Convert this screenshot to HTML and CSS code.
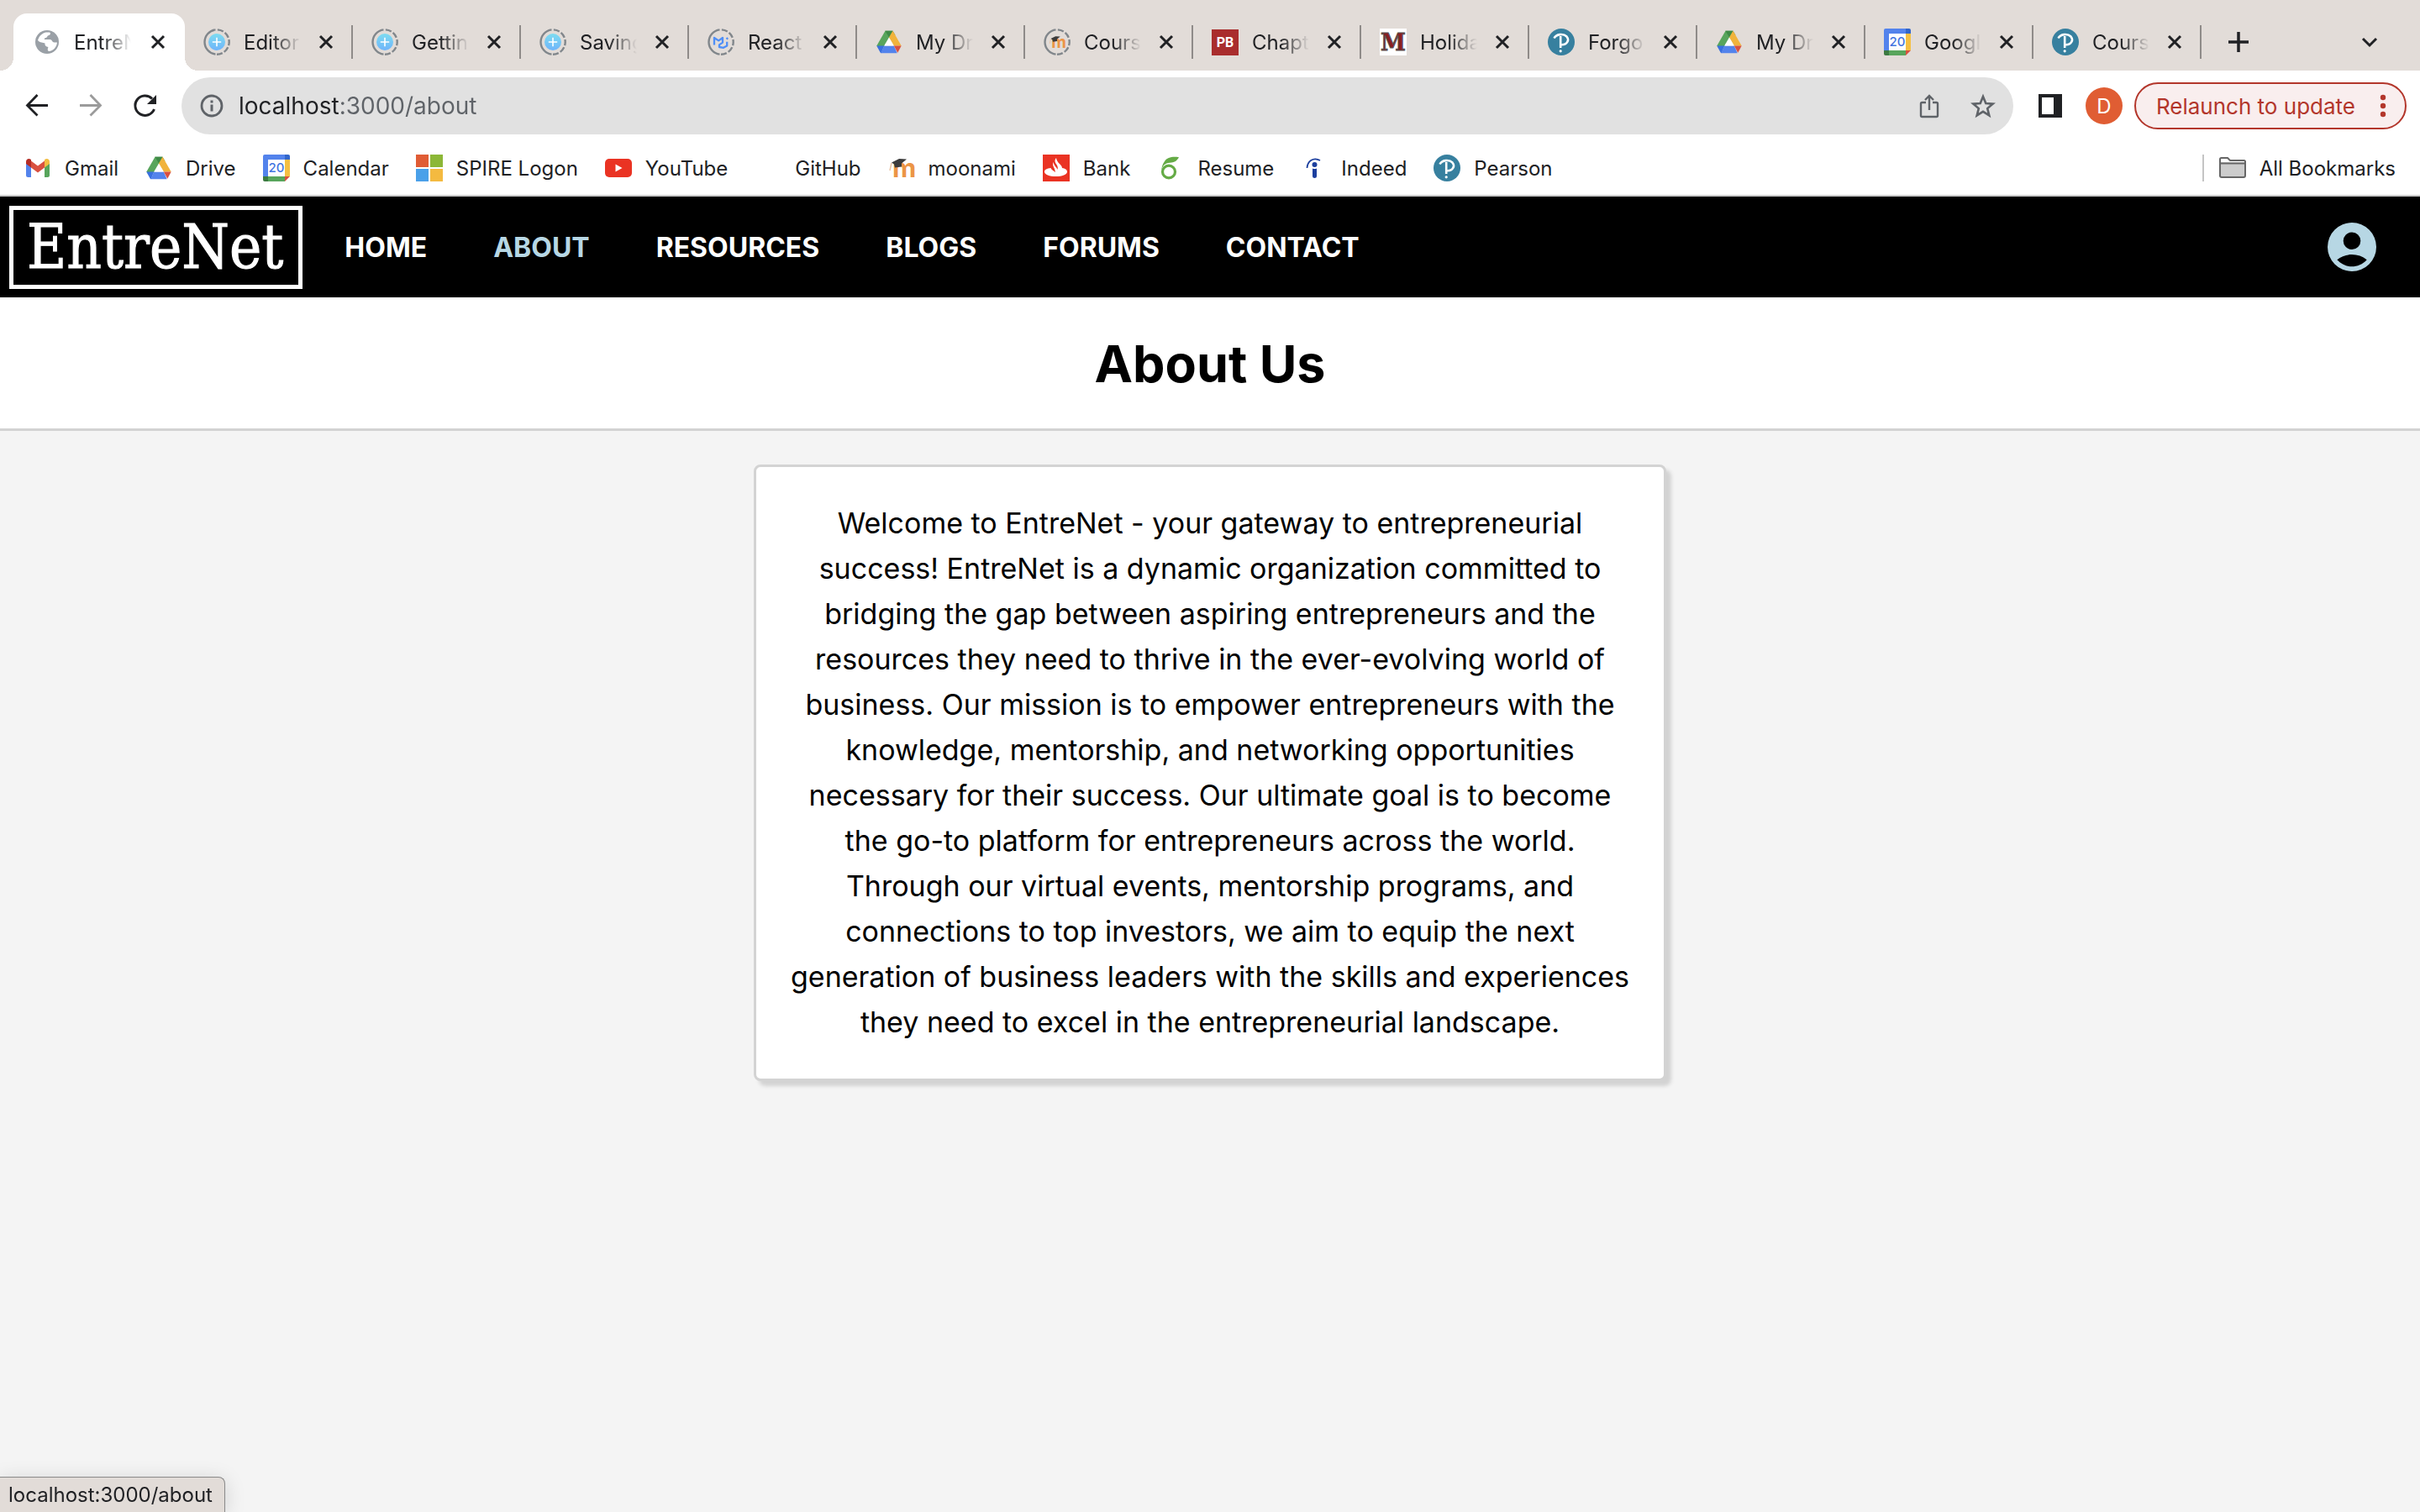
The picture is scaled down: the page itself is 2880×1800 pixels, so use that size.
FILE: index.html
```html
<!DOCTYPE html>
<html lang="en">
<head>
<meta charset="utf-8">
<title>EntreNet</title>
<link rel="stylesheet" href="styles.css">
</head>
<body>

<svg class="sprite" aria-hidden="true">
  <defs>
    <linearGradient id="sky" x1="0" y1="0" x2="0" y2="1">
      <stop offset="0" stop-color="#7ddcf0"/><stop offset="1" stop-color="#6fb4fa"/>
    </linearGradient>
    <symbol id="ring" viewBox="0 0 32 32">
      <g fill="none" stroke="#80868b" stroke-width="2.4">
        <path d="M14.5 1.4A14.7 14.7 0 0 0 14.5 30.6"/>
        <path d="M16 1.3A14.7 14.7 0 0 1 16 30.7" stroke-dasharray="7.2 2.3" stroke-dashoffset="-0.9"/>
      </g>
    </symbol>
    <symbol id="plusdoc" viewBox="0 0 32 32">
      <use href="#ring"/>
      <circle cx="16" cy="16" r="10" fill="url(#sky)"/>
      <path d="M16 10.8v10.4M10.8 16h10.4" stroke="#fff" stroke-width="1.6"/>
    </symbol>
    <symbol id="mui" viewBox="0 0 32 32">
      <use href="#ring"/>
      <path d="M8 19.5V11l5.2 3.4L18 11v5.6l-4 2.8v2.6l5 .8 4.2-2.4v-4.6M22.5 12.5l1.8-1.4" fill="none" stroke="#4f8ff7" stroke-width="2.3" stroke-linejoin="round"/>
    </symbol>
    <symbol id="moodle" viewBox="0 0 32 32">
      <text x="5" y="27" font-family="Inter, sans-serif" font-size="31" font-weight="700" fill="#ec9546">m</text>
      <path d="M4 9.5L13 5l9 .5-6 5v4l-8 1-1-4z" fill="#3c3c3c"/>
      <path d="M4 10l-2 9" stroke="#e9c3a4" stroke-width="1.5"/>
    </symbol>
    <symbol id="drive" viewBox="0 0 32 32">
      <path d="M11.5 2.8h9l3 5.2-7.5 3z" fill="#3f8a46"/>
      <path d="M11.5 2.8L1.3 20.5 6 27l14.5-21z" fill="#58a55c"/>
      <path d="M11.5 2.8h9L16 10.5z" fill="#3f8a46"/>
      <path d="M20.5 2.8h-.1L16 10.5l5.8 10h8.9z" fill="#f1b33c"/>
      <path d="M10.2 20.5H1.3L5.6 28.5q.4.7 1.2.7z" fill="#3970e0"/>
      <path d="M6.4 29.2h19.3l-3.9-8.7H10.2z" fill="#5383ec"/>
      <path d="M21.8 20.5h8.9l-4.4 8.2z" fill="#d95040"/>
      <path d="M16 10.5l5.8 10H10.2z" fill="#fff"/>
    </symbol>
    <symbol id="calendar" viewBox="0 0 32 32">
      <path d="M2 0h24v6H6v20H0V2q0-2 2-2z" fill="#5383ec"/>
      <path d="M26 0h4q2 0 2 2v4h-6z" fill="#3266cb"/>
      <path d="M26 6h6v20h-6z" fill="#f4bf42"/>
      <path d="M6 26h20v6H6z" fill="#58a55c"/>
      <path d="M0 26h6v6H2q-2 0-2-2z" fill="#3c7a41"/>
      <path d="M26 26h6l-6 6z" fill="#d95040"/>
      <path d="M6 6h20v20H6z" fill="#fff"/>
      <text x="16" y="21.3" text-anchor="middle" font-family="Inter, sans-serif" font-size="15" font-weight="500" fill="#4374e0">20</text>
    </symbol>
    <symbol id="pearson" viewBox="0 0 32 32">
      <circle cx="16" cy="16" r="16" fill="#37809f"/>
      <path d="M7.500 11.500C10 6.500 18.500 5.500 22.500 9.500C26 13.500 23 19.500 16.500 19.300M15.200 9v14" fill="none" stroke="#fff" stroke-width="2.600"/>
      <circle cx="15.200" cy="26.800" r="1.600" fill="#fff"/>
    </symbol>
    <symbol id="close" viewBox="0 0 24 24">
      <path d="M5 5l14 14M19 5L5 19" stroke="#202124" stroke-width="3"/>
    </symbol>
  </defs>
</svg>

<div class="browser">
  <div class="tabs">
    <div class="tab active">
      <button class="tab-button"><svg class="icon" viewBox="0 0 32 32"><circle cx="16" cy="16" r="14" fill="#9aa0a6"/><path d="M5 14c1.500-5 5-8.500 9.500-9.500h4.500c2 1 .5 3.500-1.500 3.700-1.500.3-1.200 2.500-2.800 2.800-1.700.2-2.200 1-1.700 2h6.500c3 .5 2.500 3.500 5 3.500h3.500c-.5 5.500-4.500 10-10 10.500-2-1-1-4-.5-5-3-.5-4.500-2-4-4.500-2-.8-6-.5-8.500-3.500z" fill="#fff"/></svg><span class="tab-title">EntreN</span></button>
      <button class="tab-close" aria-label="Close tab"><svg class="small"><use href="#close"/></svg></button>
    </div>
    <div class="tab"><button class="tab-button"><svg class="icon"><use href="#plusdoc"/></svg><span class="tab-title">Editor</span></button><button class="tab-close" aria-label="Close tab"><svg class="small"><use href="#close"/></svg></button></div>
    <div class="tab"><button class="tab-button"><svg class="icon"><use href="#plusdoc"/></svg><span class="tab-title">Gettin</span></button><button class="tab-close" aria-label="Close tab"><svg class="small"><use href="#close"/></svg></button></div>
    <div class="tab"><button class="tab-button"><svg class="icon"><use href="#plusdoc"/></svg><span class="tab-title">Saving</span></button><button class="tab-close" aria-label="Close tab"><svg class="small"><use href="#close"/></svg></button></div>
    <div class="tab"><button class="tab-button"><svg class="icon"><use href="#mui"/></svg><span class="tab-title">React</span></button><button class="tab-close" aria-label="Close tab"><svg class="small"><use href="#close"/></svg></button></div>
    <div class="tab"><button class="tab-button"><svg class="icon"><use href="#drive"/></svg><span class="tab-title">My Dr</span></button><button class="tab-close" aria-label="Close tab"><svg class="small"><use href="#close"/></svg></button></div>
    <div class="tab"><button class="tab-button"><svg class="icon" viewBox="0 0 32 32"><use href="#ring" width="32" height="32"/><use href="#moodle" x="6" y="6" width="20" height="20"/></svg><span class="tab-title">Cours</span></button><button class="tab-close" aria-label="Close tab"><svg class="small"><use href="#close"/></svg></button></div>
    <div class="tab"><button class="tab-button"><svg class="icon" viewBox="0 0 32 32"><path d="M0 1h32v31H0z" fill="#a92d2d"/><text x="16" y="22" text-anchor="middle" font-family="Roboto, sans-serif" font-size="16" font-weight="700" fill="#fff">PB</text></svg><span class="tab-title">Chapt</span></button><button class="tab-close" aria-label="Close tab"><svg class="small"><use href="#close"/></svg></button></div>
    <div class="tab"><button class="tab-button"><svg class="icon" viewBox="0 0 32 32"><path d="M0 0h32v32H0z" fill="#fff"/><text x="16" y="26" text-anchor="middle" font-family="'DejaVu Serif', serif" font-size="27" font-weight="700" fill="#8a1f22" stroke="#555" stroke-width="1">M</text></svg><span class="tab-title">Holida</span></button><button class="tab-close" aria-label="Close tab"><svg class="small"><use href="#close"/></svg></button></div>
    <div class="tab"><button class="tab-button"><svg class="icon"><use href="#pearson"/></svg><span class="tab-title">Forgo</span></button><button class="tab-close" aria-label="Close tab"><svg class="small"><use href="#close"/></svg></button></div>
    <div class="tab"><button class="tab-button"><svg class="icon"><use href="#drive"/></svg><span class="tab-title">My Dr</span></button><button class="tab-close" aria-label="Close tab"><svg class="small"><use href="#close"/></svg></button></div>
    <div class="tab"><button class="tab-button"><svg class="icon"><use href="#calendar"/></svg><span class="tab-title">Googl</span></button><button class="tab-close" aria-label="Close tab"><svg class="small"><use href="#close"/></svg></button></div>
    <div class="tab"><button class="tab-button"><svg class="icon"><use href="#pearson"/></svg><span class="tab-title">Cours</span></button><button class="tab-close" aria-label="Close tab"><svg class="small"><use href="#close"/></svg></button></div>
    <button class="new-tab" aria-label="New tab"><svg class="small" viewBox="0 0 24 24"><path d="M12 0v24M0 12h24" stroke="#202124" stroke-width="3.500"/></svg></button>
    <button class="tab-search" aria-label="Search tabs"><svg class="small" viewBox="0 0 24 24"><path d="M4 8l8 8 8-8" fill="none" stroke="#202124" stroke-width="3"/></svg></button>
  </div>

  <div class="toolbar">
    <div class="history">
      <button aria-label="Back"><svg class="icon" viewBox="0 0 32 32"><path d="M29 15.500H5M16.500 3L4.500 15.500l12 12" fill="none" stroke="#202124" stroke-width="2.800"/></svg></button>
      <button aria-label="Forward"><svg class="icon" viewBox="0 0 32 32"><path d="M3 15.500h24M15.500 3l12 12.500-12 12" fill="none" stroke="#9b9b9b" stroke-width="2.800"/></svg></button>
      <button aria-label="Reload"><svg class="icon" viewBox="0 0 32 32"><path d="M27.500 20A11.700 11.700 0 1 1 25 7.500" fill="none" stroke="#202124" stroke-width="3"/><path d="M30 3v11H19z" fill="#202124"/></svg></button>
    </div>
    <div class="omnibox">
      <svg class="info" viewBox="0 0 28 28"><circle cx="14" cy="14" r="12" fill="none" stroke="#5f6368" stroke-width="2.800"/><path d="M14 12.500v8M14 7.500v3" stroke="#5f6368" stroke-width="3"/></svg>
      <input class="url" type="text" aria-label="Address" value="localhost:3000/about">
      <button aria-label="Share"><svg class="icon" viewBox="0 0 32 32"><path d="M12 12H7.500Q6 12 6 13.500v14Q6 29 7.500 29h17q1.500 0 1.500-1.500v-14Q26 12 24.500 12H20M16 21V4M11 9l5-5 5 5" fill="none" stroke="#5f6368" stroke-width="2.400"/></svg></button>
      <button aria-label="Bookmark this tab"><svg class="icon" viewBox="0 0 32 32"><path d="M16 5l3.300 8 8.400.6-6.500 5.500 2.100 8.300L16 22.800l-7.300 4.600 2.100-8.300-6.500-5.500 8.400-.6z" fill="none" stroke="#5f6368" stroke-width="2.600"/></svg></button>
    </div>
    <button aria-label="Side panel"><svg class="icon" viewBox="0 0 32 32"><path d="M2 2h28v28H2zM6 6v20h14V6z" fill="#202124" fill-rule="evenodd"/></svg></button>
    <button class="avatar">D</button>
    <button class="relaunch">Relaunch to update<svg class="dots" viewBox="0 0 8 28"><circle cx="4" cy="4" r="3.200"/><circle cx="4" cy="14" r="3.200"/><circle cx="4" cy="24" r="3.200"/></svg></button>
  </div>

  <nav class="bookmarks" aria-label="Bookmarks">
    <a href="#"><svg class="icon" viewBox="0 0 32 32"><path d="M2 9v15.500Q2 27 4.500 27H8V13z" fill="#5383ec"/><path d="M24 13v14h3.500q2.500 0 2.500-2.500V9z" fill="#58a55c"/><path d="M8 7.500l8 6 8-6v8l-8 6-8-6z" fill="#d95040"/><path d="M2 11V8.500C2 5 5.500 4 8 6v9.500z" fill="#b52d25"/><path d="M30 11V8.500C30 5 26.500 4 24 6v9.500z" fill="#f2bd42"/></svg>Gmail</a>
    <a href="#"><svg class="icon"><use href="#drive"/></svg>Drive</a>
    <a href="#"><svg class="icon"><use href="#calendar"/></svg>Calendar</a>
    <a href="#"><svg class="icon" viewBox="0 0 32 32"><path d="M0 0h15v15H0z" fill="#e05c35"/><path d="M17 0h15v15H17z" fill="#8cb737"/><path d="M0 17h15v15H0z" fill="#4aa0e9"/><path d="M17 17h15v15H17z" fill="#f4ba40"/></svg>SPIRE Logon</a>
    <a href="#"><svg class="icon" viewBox="0 0 32 32"><rect y="5" width="32" height="22" rx="5" fill="#ea3323"/><path d="M12.500 11.500v9l8-4.500z" fill="#fff"/></svg>YouTube</a>
    <a href="#"><svg class="icon"></svg>GitHub</a>
    <a href="#"><svg class="icon"><use href="#moodle"/></svg>moonami</a>
    <a href="#"><svg class="icon" viewBox="0 0 32 32"><path d="M0 0h32v32H0z" fill="#ea3323"/><path d="M9.500 16C5 16.500 2 18 2 20.500 2 24 8 26 15.500 26S29 24 29 20.500c0-2.500-2.500-4-6-4.500 0-4-6.500-6-7-12-2.500 3-1.500 5 .5 8 1.500 2.500 1.500 4 1 6-.5-3-5-5-4.500-9-2 2.500-.5 5 1 8l1 4c-2.500-2-5-3-5.500-5z" fill="#fff"/></svg>Bank</a>
    <a href="#"><svg class="icon" viewBox="0 0 32 32"><ellipse cx="14" cy="20.500" rx="7.500" ry="7.300" fill="none" stroke="#65ab46" stroke-width="3.200"/><path d="M5.500 19C6.500 11 12 10 17 9.500c5-.5 7-3 9-6.300C19 2 12 3 9 8c-3 4-3.800 8-3.500 11z" fill="#65ab46"/></svg>Resume</a>
    <a href="#"><svg class="icon" viewBox="0 0 32 32"><path d="M14 16.500q2.500 1.200 5 0V26q0 2-2.500 2T14 26z" fill="#1c3f9e"/><circle cx="16.500" cy="12" r="3" fill="#1c3f9e"/><path d="M7.500 16C8 8 15 2.500 23 7" fill="none" stroke="#1c3f9e" stroke-width="1.800"/></svg>Indeed</a>
    <a href="#"><svg class="icon"><use href="#pearson"/></svg>Pearson</a>
    <a class="all-bookmarks" href="#"><svg class="icon" viewBox="0 0 32 32"><path d="M1 9h30v18H1z" fill="#ccc"/><path d="M1 26V5.500Q1 4 2.500 4H10l3 3h16.500Q31 7 31 8.500V25q0 2-2 2H3q-2 0-2-2zM1 10.500h30" fill="none" stroke="#666" stroke-width="2"/></svg>All Bookmarks</a>
  </nav>
</div>

<header class="navbar">
  <a class="logo" href="#">EntreNet</a>
  <nav class="links">
    <a href="#">HOME</a>
    <a class="current" href="#">ABOUT</a>
    <a href="#">RESOURCES</a>
    <a href="#">BLOGS</a>
    <a href="#">FORUMS</a>
    <a href="#">CONTACT</a>
  </nav>
  <button class="account" aria-label="Account"><svg viewBox="0 0 58 58"><path d="M29 0a29 29 0 1 0 0 58 29 29 0 0 0 0-58zm0 11.500a10.300 10.300 0 1 1 0 20.600 10.300 10.300 0 0 1 0-20.600zM11.300 44.300C21 36 37 36 46.700 44.300 37 55 21 55 11.300 44.300z" fill="#b7d7e4" fill-rule="evenodd"/></svg></button>
</header>

<div class="page-title"><h1>About Us</h1></div>

<main>
  <p class="card">Welcome to EntreNet - your gateway to entrepreneurial success! EntreNet is a dynamic organization committed to bridging the gap between aspiring entrepreneurs and the resources they need to thrive in the ever-evolving world of business. Our mission is to empower entrepreneurs with the knowledge, mentorship, and networking opportunities necessary for their success. Our ultimate goal is to become the go-to platform for entrepreneurs across the world. Through our virtual events, mentorship programs, and connections to top investors, we aim to equip the next generation of business leaders with the skills and experiences they need to excel in the entrepreneurial landscape.</p>
</main>

<div class="status">localhost:3000/about</div>

</body>
</html>
```
FILE: styles.css
```css
* {
  box-sizing: border-box;
}

body {
  margin: 0;
  min-height: 100vh;
  display: flex;
  flex-direction: column;
  background: #f4f4f4;
  color: #000;
  font-family: Inter, "Liberation Sans", sans-serif;
}

button {
  display: flex;
  align-items: center;
  padding: 0;
  border: 0;
  background: none;
  color: inherit;
  font: inherit;
}

a {
  color: inherit;
  text-decoration: none;
}

svg {
  display: block;
  flex: none;
}

.sprite {
  position: absolute;
  width: 0;
  height: 0;
}

.icon {
  width: 32px;
  height: 32px;
}

.small {
  width: 24px;
  height: 24px;
}

/* Browser chrome */
.browser {
  background: #fff;
  border-bottom: 2px solid #ccc;
  color: #202124;
  font-size: 24px;
}

.tabs {
  display: flex;
  height: 84px;
  padding: 16px 48px 0 16px;
  background: #e2dcd8;
}

.tab {
  display: flex;
  align-items: center;
  width: 200px;
  padding-left: 22px;
}

.tab::after {
  content: "";
  width: 2px;
  height: 40px;
  margin-left: auto;
  background: #8f8b89;
}

.tab-button {
  gap: 16px;
}

.tab-title {
  width: 68px;
  overflow: hidden;
  text-align: left;
  white-space: nowrap;
  mask-image: linear-gradient(90deg, #000 50%, transparent);
}

.tab-close {
  margin-left: 18px;
}

.tab.active {
  position: relative;
  width: 204px;
  padding-left: 24px;
  border-radius: 16px 16px 0 0;
  background: #fff;
}

.tab.active .tab-close {
  margin-left: 20px;
}

.tab.active::before,
.tab.active::after {
  content: "";
  position: absolute;
  bottom: 0;
  width: 16px;
  height: 16px;
}

.tab.active::before {
  right: 100%;
  background: radial-gradient(circle at 0 0, transparent 16px, #fff 16px);
}

.tab.active::after {
  left: 100%;
  background: radial-gradient(circle at 100% 0, transparent 16px, #fff 16px);
}

.new-tab {
  margin-left: 32px;
}

.tab-search {
  margin-left: auto;
}

.toolbar {
  display: flex;
  align-items: center;
  height: 84px;
  padding: 0 16px 0 28px;
}

.history {
  display: flex;
  gap: 32px;
}

.omnibox {
  flex: 1;
  display: flex;
  align-items: center;
  gap: 32px;
  height: 68px;
  margin: 0 28px;
  padding: 0 20px 0 22px;
  border-radius: 34px;
  background: #e1e1e1;
}

.info {
  width: 28px;
  height: 28px;
}

.url {
  flex: 1;
  min-width: 0;
  margin-left: -14px;
  padding: 0;
  border: 0;
  outline: 0;
  background: linear-gradient(90deg, #202124 120px, #5f6368 120px);
  background-clip: text;
  color: transparent;
  font: 28px/34px Inter, "Liberation Sans", sans-serif;
}

.avatar {
  justify-content: center;
  width: 44px;
  height: 44px;
  margin: 0 14px 0 26px;
  border-radius: 50%;
  background: #e05d33;
  color: #fff;
}

.relaunch {
  gap: 29px;
  height: 56px;
  padding: 0 22px 0 24px;
  border: 2px solid #b3362b;
  border-radius: 28px;
  background: #f9eeee;
  color: #b3362b;
  font-size: 26px;
}

.dots {
  width: 8px;
  height: 28px;
  fill: #b3362b;
}

.bookmarks {
  display: flex;
  align-items: center;
  gap: 32px;
  height: 64px;
  padding: 0 29px;
}

.bookmarks a {
  display: flex;
  align-items: center;
  gap: 16px;
  height: 32px;
}

.bookmarks .all-bookmarks {
  margin-left: auto;
  padding-left: 18px;
  border-left: 2px solid #c4c4c4;
}

/* Site navigation */
.navbar {
  display: flex;
  align-items: center;
  height: 120px;
  padding: 0 52px 0 11px;
  background: #000;
  color: #fff;
}

.logo {
  padding: 0 18px 0 16px;
  border: 5px solid #fff;
  font: 72px/89px "DejaVu Serif Condensed", "DejaVu Serif", serif;
  -webkit-text-stroke: 1px #fff;
}

.links {
  display: flex;
  gap: 79px;
  margin-left: 50px;
  font-size: 32px;
  font-weight: 700;
}

.current {
  color: #b7d7e4;
}

.account {
  width: 58px;
  height: 58px;
  margin-left: auto;
}

/* Page */
.page-title {
  padding: 43px 0 41px;
  border-bottom: 3px solid lightgray;
  background: #fff;
}

.page-title h1 {
  margin: 0;
  font-size: 61px;
  line-height: 72px;
  text-align: center;
}

main {
  padding: 40px;
}

.card {
  max-width: 1086px;
  margin: 0 auto;
  padding: 40px;
  border: 3px solid lightgray;
  border-radius: 8px;
  background: #fff;
  box-shadow: 6px 6px 4px lightgray;
  font-size: 34px;
  line-height: 54px;
  text-align: center;
}

.status {
  position: fixed;
  bottom: 0;
  left: 0;
  padding: 0 14px 0 10px;
  border: 1px solid #8a8a8a;
  border-width: 1px 1px 0 0;
  border-radius: 0 8px 0 0;
  background: #e2dcd8;
  box-shadow: 0 4px 24px rgba(0, 0, 0, 0.15);
  color: #202124;
  font-size: 24px;
  line-height: 41px;
}
```
